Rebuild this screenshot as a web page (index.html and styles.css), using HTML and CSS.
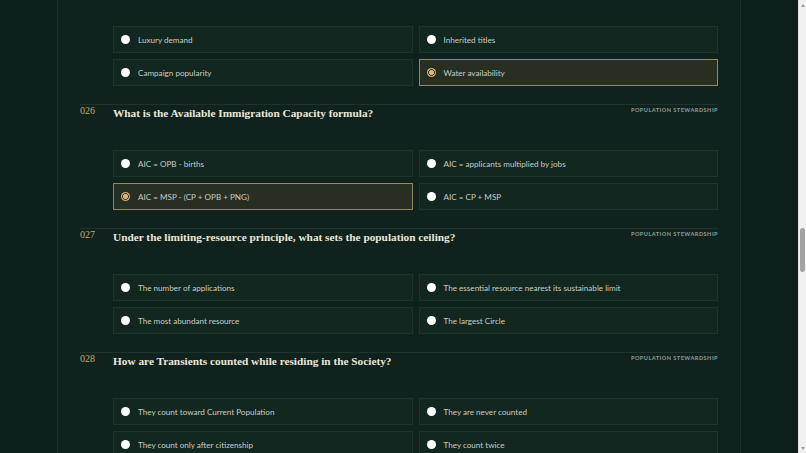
FILE: index.html
```html
<!DOCTYPE html>
<html lang="en">
<head>
<meta charset="utf-8">
<title>Population Stewardship — Practice Quiz</title>
<link rel="stylesheet" href="styles.css">
</head>
<body>
<main class="panel">
  <section class="question continued">
    <div class="options">
      <label class="option"><input type="radio" name="q025"><span>Luxury demand</span></label>
      <label class="option"><input type="radio" name="q025"><span>Inherited titles</span></label>
      <label class="option"><input type="radio" name="q025"><span>Campaign popularity</span></label>
      <label class="option"><input type="radio" name="q025" checked><span>Water availability</span></label>
    </div>
  </section>
  <section class="question">
    <header class="q-head"><span class="q-num">026</span><h2 class="q-text">What is the Available Immigration Capacity formula?</h2><span class="q-cat">Population Stewardship</span></header>
    <div class="options">
      <label class="option"><input type="radio" name="q026"><span>AIC = OPB - births</span></label>
      <label class="option"><input type="radio" name="q026"><span>AIC = applicants multiplied by jobs</span></label>
      <label class="option"><input type="radio" name="q026" checked><span>AIC = MSP - (CP + OPB + PNG)</span></label>
      <label class="option"><input type="radio" name="q026"><span>AIC = CP + MSP</span></label>
    </div>
  </section>
  <section class="question">
    <header class="q-head"><span class="q-num">027</span><h2 class="q-text">Under the limiting-resource principle, what sets the population ceiling?</h2><span class="q-cat">Population Stewardship</span></header>
    <div class="options">
      <label class="option"><input type="radio" name="q027"><span>The number of applications</span></label>
      <label class="option"><input type="radio" name="q027"><span>The essential resource nearest its sustainable limit</span></label>
      <label class="option"><input type="radio" name="q027"><span>The most abundant resource</span></label>
      <label class="option"><input type="radio" name="q027"><span>The largest Circle</span></label>
    </div>
  </section>
  <section class="question">
    <header class="q-head"><span class="q-num">028</span><h2 class="q-text">How are Transients counted while residing in the Society?</h2><span class="q-cat">Population Stewardship</span></header>
    <div class="options">
      <label class="option"><input type="radio" name="q028"><span>They count toward Current Population</span></label>
      <label class="option"><input type="radio" name="q028"><span>They are never counted</span></label>
      <label class="option"><input type="radio" name="q028"><span>They count only after citizenship</span></label>
      <label class="option"><input type="radio" name="q028"><span>They count twice</span></label>
    </div>
  </section>
</main>
<div class="scrollbar" aria-hidden="true">
  <span class="sb-arrow sb-up"></span>
  <span class="sb-track"><span class="sb-thumb"></span></span>
  <span class="sb-arrow sb-down"></span>
</div>
</body>
</html>
```

FILE: styles.css
```css
* { box-sizing: border-box; }

html {
  background: #0c1f1a;
}

body {
  margin: 0;
  padding-right: 8px;
  font-family: "Lato", "Segoe UI", sans-serif;
  color: #c8cdc6;
  background: #0c1f1a;
}

.panel {
  max-width: 684px;
  min-height: 100vh;
  margin: 0 auto;
  padding: 0 22px 40px;
  background: #0f221d;
  border-left: 1px solid #1a3129;
  border-right: 1px solid #1a3129;
}

.question {
  border-top: 1px solid #1c342b;
  padding-bottom: 18px;
}

.question.continued {
  border-top: 0;
  padding-top: 26px;
}

.q-head {
  display: grid;
  grid-template-columns: 33px 1fr auto;
  align-items: start;
  height: 45px;
}

.q-num {
  font-family: "Liberation Serif", "DejaVu Serif", serif;
  font-size: 10px;
  line-height: 12px;
  color: #c4a66c;
  padding-top: 0;
}

.q-text {
  margin: 0;
  font-family: "Liberation Serif", "DejaVu Serif", serif;
  font-weight: 700;
  font-size: 11.3px;
  line-height: 14px;
  color: #ebe6d9;
  padding-top: 1px;
}

.q-cat {
  font-family: "Lato", sans-serif;
  font-weight: 900;
  font-size: 5.6px;
  line-height: 8px;
  letter-spacing: 0.45px;
  text-transform: uppercase;
  color: #86948d;
  padding-top: 1px;
}

.options {
  display: grid;
  grid-template-columns: 1fr 1fr;
  gap: 6px;
  margin-left: 33px;
}

.option {
  display: flex;
  align-items: center;
  gap: 8px;
  height: 27px;
  padding: 0 7px;
  background: #12271f;
  border: 1px solid #1d352b;
  font-size: 8.1px;
  cursor: pointer;
}

.option:has(input:checked) {
  background: #272f23;
  border-color: #8d8a60;
}

.option input {
  appearance: none;
  flex: none;
  width: 9px;
  height: 9px;
  margin: 0;
  border-radius: 50%;
  background: #ffffff;
}

.option input:checked {
  background: radial-gradient(circle, #d8b67c 0 2.2px, #3b3a29 2.7px 3.1px, #c9a96b 3.5px);
}

/* window scrollbar as drawn in the capture */
.scrollbar {
  position: fixed;
  top: 0;
  right: 0;
  bottom: 0;
  width: 8px;
  display: flex;
  flex-direction: column;
  background: #f1f1f1;
  border-left: 1px solid #e4e4e4;
}

.sb-arrow {
  flex: none;
  height: 10px;
  display: flex;
  align-items: center;
  justify-content: center;
}

.sb-arrow::before {
  content: "";
  border-left: 2.5px solid transparent;
  border-right: 2.5px solid transparent;
}

.sb-up::before { border-bottom: 3px solid #9a9a9a; }
.sb-down::before { border-top: 3px solid #9a9a9a; }

.sb-track {
  flex: 1;
  display: flex;
  flex-direction: column;
  align-items: center;
}

.sb-thumb {
  width: 5px;
  height: 44px;
  margin-top: 218px;
  border-radius: 3px;
  background: #a3a3a3;
}
```
